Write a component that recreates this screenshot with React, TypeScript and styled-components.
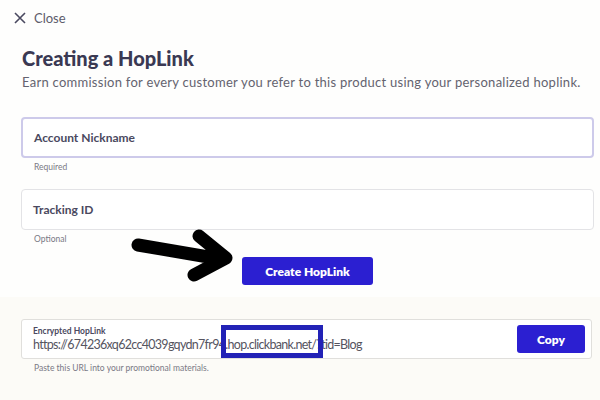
import React from 'react'
import styled, { createGlobalStyle } from 'styled-components'

const GlobalStyle = createGlobalStyle`
  html, body {
    margin: 0;
    padding: 0;
    background: #fcfbf7;
  }
  * {
    box-sizing: border-box;
  }
`

const Page = styled.div`
  position: relative;
  width: 600px;
  height: 400px;
  overflow: hidden;
  font-family: Lato, 'Open Sans', sans-serif;
  color: #3b3a55;
`

const TopSection = styled.section`
  background: #fefefd;
  padding: 11px 6px 12px 21px;
  display: flex;
  flex-direction: column;
`

const CloseRow = styled.div`
  display: flex;
  align-items: center;
  gap: 7px;
  margin-left: -8px;
  font-size: 13px;
  color: #5d5c6b;
  height: 14px;
`

const Title = styled.h1`
  margin: 21px 0 0 1px;
  font-size: 20px;
  line-height: 24px;
  font-weight: 900;
  color: #3a3953;
`

const Subtitle = styled.p`
  margin: 4px 0 0 1px;
  font-size: 13px;
  line-height: 16px;
  letter-spacing: 0.27px;
  color: #64636f;
`

const Field = styled.div<{ $focused?: boolean }>`
  height: 41px;
  display: flex;
  align-items: center;
  padding-left: 11px;
  border: ${p => (p.$focused ? '2px solid #cdcaea' : '1px solid #e3e3e6')};
  border-radius: 4px;
  background: #fff;
  font-size: 12px;
  font-weight: 700;
  color: #4a4960;
`

const FieldGroup = styled.div<{ $gap: number }>`
  margin-top: ${p => p.$gap}px;
`

const Hint = styled.div`
  margin: 4px 0 0 13px;
  font-size: 8.5px;
  line-height: 10px;
  color: #7a7985;
`

const ButtonRow = styled.div`
  display: flex;
  justify-content: center;
  margin-top: 13px;
`

const PrimaryButton = styled.button<{ $w: number }>`
  width: ${p => p.$w}px;
  height: 28px;
  border: none;
  border-radius: 3px;
  background: #2b1fd1;
  color: #fff;
  font-family: inherit;
  font-size: 12px;
  font-weight: 800;
`

const BottomSection = styled.section`
  padding: 22px 8px 0 21px;
`

const LinkBox = styled.div`
  height: 40px;
  display: flex;
  align-items: center;
  justify-content: space-between;
  padding: 0 6px 0 11px;
  border: 1px solid #e0dfdc;
  border-radius: 3px;
  background: #fff;
`

const LinkText = styled.div`
  display: flex;
  flex-direction: column;
`

const LinkLabel = styled.div`
  font-size: 8.5px;
  font-weight: 700;
  color: #4a4960;
  line-height: 10px;
`

const LinkUrl = styled.div`
  font-size: 12.5px;
  line-height: 17px;
  color: #55545f;
  letter-spacing: -0.7px;
`

const Highlight = styled.div`
  position: absolute;
  left: 221px;
  top: 325px;
  width: 102px;
  height: 33px;
  border: 5px solid #2222b6;
`

const Arrow = styled.svg`
  position: absolute;
  left: 0;
  top: 0;
  pointer-events: none;
`

export default function App() {
  return (
    <>
      <GlobalStyle />
      <Page>
        <TopSection>
          <CloseRow>
            <svg width="14" height="14" viewBox="0 0 14 14">
              <path d="M2 2 L12 12 M12 2 L2 12" stroke="#4a4960" strokeWidth="1.6" />
            </svg>
            Close
          </CloseRow>
          <Title>Creating a HopLink</Title>
          <Subtitle>
            Earn commission for every customer you refer to this product using your personalized hoplink.
          </Subtitle>
          <FieldGroup $gap={27}>
            <Field $focused>Account Nickname</Field>
            <Hint>Required</Hint>
          </FieldGroup>
          <FieldGroup $gap={17}>
            <Field>Tracking ID</Field>
            <Hint>Optional</Hint>
          </FieldGroup>
          <ButtonRow>
            <PrimaryButton $w={131}>Create HopLink</PrimaryButton>
          </ButtonRow>
        </TopSection>
        <BottomSection>
          <LinkBox>
            <LinkText>
              <LinkLabel>Encrypted HopLink</LinkLabel>
              <LinkUrl>https://674236xq62cc4039gqydn7fr94.hop.clickbank.net/?tid=Blog</LinkUrl>
            </LinkText>
            <PrimaryButton $w={68}>Copy</PrimaryButton>
          </LinkBox>
          <Hint>Paste this URL into your promotional materials.</Hint>
        </BottomSection>
        <Highlight />
        <Arrow width="600" height="400" viewBox="0 0 600 400">
          <path
            d="M138 245 L220 259 M199 236 L226 258 L194 275"
            fill="none"
            stroke="#000"
            strokeWidth="13"
            strokeLinecap="round"
            strokeLinejoin="round"
          />
        </Arrow>
      </Page>
    </>
  )
}
